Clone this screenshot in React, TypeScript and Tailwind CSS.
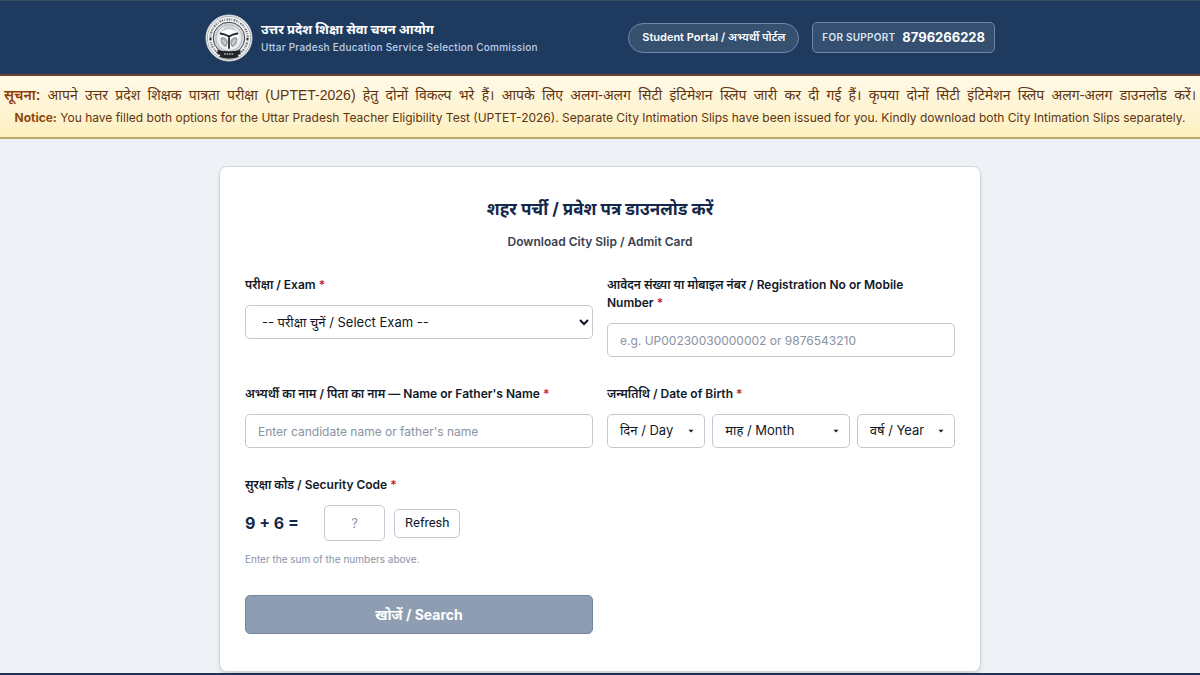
import type { ReactNode } from "react";

const controlClass =
  "h-[34px] w-full rounded-[5px] border border-[#c3c8d0] bg-white px-3 text-[#111827] outline-none focus:border-[#1e3a5f]";
const inputClass = `${controlClass} text-[12px] placeholder:text-[#8a93a3]`;
const selectClass = `${controlClass} text-[13px]`;

function Label({ htmlFor, children }: { htmlFor: string; children: ReactNode }) {
  return (
    <label htmlFor={htmlFor} className="block text-[12px] leading-[18px] font-semibold text-[#111827]">
      {children}
      {"\u00a0"}
      <span className="text-[#c81e1e]">*</span>
    </label>
  );
}

function DatePart({ id, label }: { id: string; label: string }) {
  return (
    <div className="relative">
      <select id={id} aria-label={label} className={`${selectClass} appearance-none`}>
        <option>{label}</option>
      </select>
      <svg viewBox="0 0 6 4" className="pointer-events-none absolute top-[15px] right-[11px] h-[4px] w-[6px]" aria-hidden="true">
        <path d="M0.5 0.8h5L3 3.5z" fill="#111827" />
      </svg>
    </div>
  );
}

function Emblem() {
  return (
    <svg viewBox="0 0 48 48" className="size-12 shrink-0" role="img" aria-label="Commission emblem">
      <defs>
        <radialGradient id="disc">
          <stop offset="0.5" stopColor="#ffffff" />
          <stop offset="1" stopColor="#c9ccd0" />
        </radialGradient>
      </defs>
      <circle cx="24" cy="24" r="23" fill="#f8f8f8" stroke="#d4d7db" />
      <circle cx="24" cy="24" r="21.6" fill="none" stroke="#8b8f94" strokeWidth="0.7" />
      <circle cx="24" cy="24" r="18.7" fill="none" stroke="#777c82" strokeWidth="2.2" strokeDasharray="1.4 1.1 0.8 1.3 1.9 0.8" />
      <circle cx="24" cy="24" r="15.8" fill="url(#disc)" stroke="#42474d" strokeWidth="1" />
      <circle cx="24" cy="24" r="13.2" fill="none" stroke="#a4a8ad" strokeWidth="0.7" />
      <circle cx="5.6" cy="25" r="1.1" fill="#1c1f23" />
      <circle cx="42.4" cy="25" r="1.1" fill="#1c1f23" />
      <path d="M15.5 19.5q5 .8 8.5 3q3.5-2.2 8.5-3M24 22v12" fill="none" stroke="#24282c" strokeWidth="1.8" strokeLinecap="round" />
      <path d="M19 14.5q5-3.4 10 0M17 16.5q7-3.8 14 0" fill="none" stroke="#b2b5b9" strokeWidth="0.9" />
      <path d="M16 24q4-1.5 6 2.2q.8 3.6-1 6.3q-5.4-1.5-5-8.5zM32 24q-4-1.5-6 2.2q-.8 3.6 1 6.3q5.4-1.5 5-8.5z" fill="#b0b4b8" stroke="#74797e" strokeWidth="0.7" />
      <path d="M17.5 26l3.4 4M30.5 26l-3.4 4" stroke="#eceded" strokeWidth="1" />
      <path d="M12.5 36q11.5 2.4 23 0v4.5h-3l1.2 2.4q-9.7 3.6-19.4 0l1.2-2.4h-3z" fill="#202327" />
      <path d="M19 40h10" stroke="#a3a6aa" strokeWidth="1.3" strokeDasharray="1.8 .7" />
    </svg>
  );
}

export default function App() {
  return (
    <div className="min-h-screen bg-[#eef2f7] font-['Inter','Noto_Sans',sans-serif] text-[#111827]">
      <header className="border-t border-b-2 border-t-[#34505f] border-b-[#6b4530] bg-[#1e3a5f] px-4">
        <div className="mx-auto flex min-h-[73px] max-w-[790px] items-center justify-between gap-4">
          <div className="flex items-center gap-[8px]">
            <Emblem />
            <div>
              <p className="text-[13px] leading-[18px] font-bold text-white">उत्तर प्रदेश शिक्षा सेवा चयन आयोग</p>
              <p className="text-[10px] leading-[18px] font-medium tracking-wide text-[#bfd0e6]">
                Uttar Pradesh Education Service Selection Commission
              </p>
            </div>
          </div>
          <div className="flex items-center gap-[13px]">
            <a href="#portal" className="flex h-[30px] items-center rounded-full border border-[#6f86a6] bg-[#36506f] px-[13px] text-[11px] font-semibold whitespace-nowrap text-white">
              Student Portal / अभ्यर्थी पोर्टल
            </a>
            <a href="tel:8796266228" className="flex h-[31px] items-center gap-[7px] rounded-[5px] border border-[#6f86a6] bg-[#344f70] px-[9px] whitespace-nowrap">
              <span className="text-[10px] font-semibold tracking-wide text-[#dbe5f2]">FOR SUPPORT</span>
              <span className="text-[13px] font-bold text-white">8796266228</span>
            </a>
          </div>
        </div>
      </header>

      <section className="border-b-2 border-[#c2a568] bg-linear-to-b from-[#fff9e8] to-[#fdf0c0] px-[4px] pt-[9px] pb-[8px] text-center text-[#5f3410]">
        <p className="text-justify font-['Liberation_Sans','Noto_Sans',sans-serif] text-[14px] leading-[21px] [text-align-last:justify]">
          <strong className="font-semibold text-[#8f3c0c]">सूचना:</strong> आपने उत्तर प्रदेश शिक्षक पात्रता परीक्षा (UPTET-2026) हेतु दोनों विकल्प भरे हैं। आपके लिए अलग-अलग सिटी इंटिमेशन स्लिप जारी कर दी गई हैं। कृपया दोनों सिटी इंटिमेशन स्लिप अलग-अलग डाउनलोड करें।
        </p>
        <p className="text-[12px] leading-[23px]">
          <strong className="font-bold text-[#8f4a0c]">Notice:</strong> You have filled both options for the Uttar Pradesh Teacher Eligibility Test (UPTET-2026). Separate City Intimation Slips have been issued for you. Kindly download both City Intimation Slips separately.
        </p>
      </section>

      <main className="px-4 pt-[27px]">
        <form className="mx-auto max-w-[762px] rounded-lg border border-[#d0d5dd] bg-white px-[25px] pt-[28px] pb-[37px] shadow-md" onSubmit={(e) => e.preventDefault()}>
          <h1 className="text-center text-[17px] leading-[28px] font-bold text-[#14284b]">शहर पर्ची / प्रवेश पत्र डाउनलोड करें</h1>
          <p className="mt-[10px] text-center text-[12px] leading-[18px] font-semibold text-[#374151]">Download City Slip / Admit Card</p>

          <div className="mt-[25px] grid grid-cols-2 gap-x-[14px] gap-y-[28px]">
            <div>
              <Label htmlFor="exam">परीक्षा / Exam</Label>
              <select id="exam" className={`${selectClass} mt-[11px]`}>
                <option>-- परीक्षा चुनें / Select Exam --</option>
              </select>
            </div>
            <div>
              <Label htmlFor="registration">आवेदन संख्या या मोबाइल नंबर / Registration No or Mobile Number</Label>
              <input id="registration" className={`${inputClass} mt-[11px]`} placeholder="e.g. UP00230030000002 or 9876543210" />
            </div>
            <div>
              <Label htmlFor="name">अभ्यर्थी का नाम / पिता का नाम — Name or Father's Name</Label>
              <input id="name" className={`${inputClass} mt-[11px]`} placeholder="Enter candidate name or father's name" />
            </div>
            <div>
              <Label htmlFor="day">जन्मतिथि / Date of Birth</Label>
              <div className="mt-[11px] grid grid-cols-[1fr_1.4fr_1fr] gap-[7px]">
                <DatePart id="day" label="दिन / Day" />
                <DatePart id="month" label="माह / Month" />
                <DatePart id="year" label="वर्ष / Year" />
              </div>
            </div>
            <div>
              <Label htmlFor="code">सुरक्षा कोड / Security Code</Label>
              <div className="mt-[11px] flex items-center gap-[9px]">
                <span className="w-[70px] text-[16px] font-bold text-[#14284b]">9 + 6 =</span>
                <input id="code" placeholder="?" className="h-[36px] w-[61px] rounded-[5px] border border-[#c3c8d0] text-center text-[13px] placeholder:text-[#8a93a3]" />
                <button type="button" className="h-[29px] rounded-[5px] border border-[#c3c8d0] bg-white px-[10px] font-['Roboto',sans-serif] text-[13px]">Refresh</button>
              </div>
              <p className="mt-[11px] text-[10px] leading-[15px] text-[#8a93a3]">Enter the sum of the numbers above.</p>
            </div>
            <button type="submit" className="col-start-1 h-[39px] rounded-[5px] border border-[#75869c] bg-[#8e9db1] text-[14px] font-bold text-white">
              खोजें / Search
            </button>
          </div>
        </form>
      </main>
      <footer className="mt-px h-[2px] bg-[#1b2f57]" />
    </div>
  );
}
